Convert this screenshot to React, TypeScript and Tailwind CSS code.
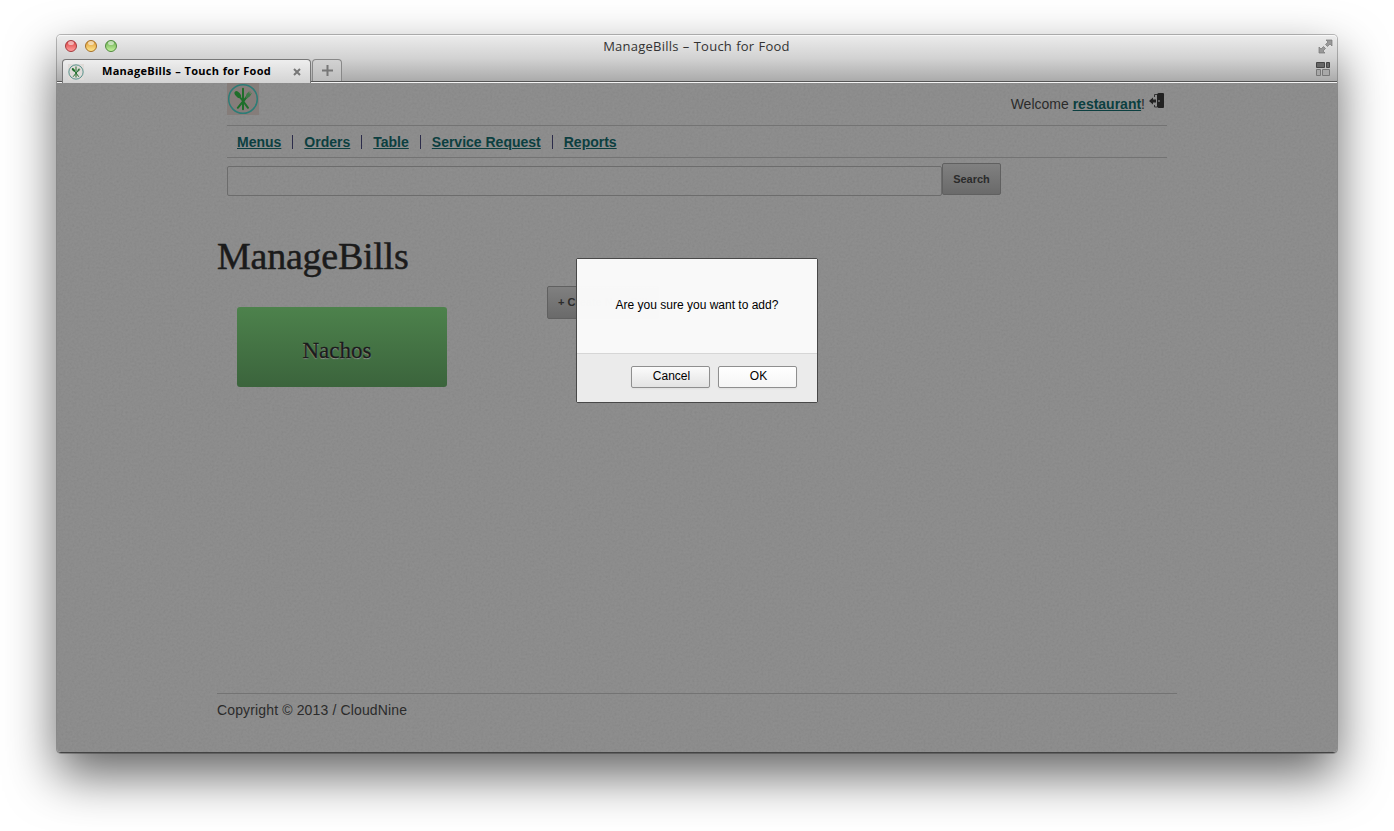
import React from "react";

function Logo({ className }: { className: string }) {
  return (
    <svg className={className} viewBox="0 0 32 32" fill="none">
      <circle cx="16" cy="16" r="14.3" stroke="#2d7c76" strokeWidth="1.5" />
      <g stroke="#1f6e2a" strokeWidth="2" strokeLinecap="round">
        <path d="M16 5.8V26.3" />
        <path d="M12 13L16 18L21 24.8" />
        <path d="M20.5 13L16 18.5L10.8 24.8" />
      </g>
      <ellipse cx="10.8" cy="11.6" rx="2.3" ry="4.2" transform="rotate(-40 10.8 11.6)" fill="#1f6e2a" />
      <path d="M18.5 14.5L19.5 11L22.8 7.6L21.4 10.6L24 8.2L22.4 11.2L25 9.8L23 13.2L20 15.6Z" fill="#3b7a45" />
    </svg>
  );
}

function TrafficLight({ className }: { className: string }) {
  return (
    <span className={`relative block h-3 w-3 overflow-hidden rounded-full border ${className}`}>
      <span className="absolute left-[2px] top-0 h-[4px] w-[6px] rounded-full bg-white/55" />
    </span>
  );
}

function Texture() {
  return (
    <svg className="pointer-events-none absolute inset-0 h-full w-full opacity-[0.08]" aria-hidden="true">
      <filter id="paper">
        <feTurbulence type="fractalNoise" baseFrequency="0.45" numOctaves="2" stitchTiles="stitch" />
        <feColorMatrix type="saturate" values="0" />
        <feComponentTransfer><feFuncA type="linear" slope="0" intercept="1" /></feComponentTransfer>
      </filter>
      <rect width="100%" height="100%" filter="url(#paper)" />
    </svg>
  );
}

function TitleBar() {
  return (
    <header className="relative flex h-[48px] flex-col rounded-t-[4px] border-b border-[#f4f4f4] bg-linear-to-b from-[#ececec] via-[#d2d2d2] to-[#a9a9a9] shadow-[inset_0_1px_0_#f8f8f8,inset_0_-1px_0_#555]">
      <div className="flex h-[23px] items-center px-2 pb-px">
        <div className="flex w-24 gap-2">
          <TrafficLight className="border-[#a3383b] bg-linear-to-b from-[#d8363c] to-[#ff9d9d]" />
          <TrafficLight className="border-[#a56e25] bg-linear-to-b from-[#dc982c] to-[#ffe68c]" />
          <TrafficLight className="border-[#4f8a3c] bg-linear-to-b from-[#67ac4d] to-[#c4f29d]" />
        </div>
        <h2 className="flex-1 whitespace-nowrap pr-px text-center font-['Open_Sans',sans-serif] text-[13px] leading-[22px] tracking-[0.24px] text-[#333] [word-spacing:0.5px]">
          ManageBills – Touch for Food
        </h2>
        <div className="flex w-24 justify-end">
          <svg className="h-[15px] w-[15px] translate-x-[4px]" viewBox="0 0 15 15" fill="#999" stroke="#777" strokeWidth=".7">
            <path d="M8 1H14V7L12 5L9.5 7.5L7.5 5.5L10 3Z" />
            <path d="M1 8V14H7L5 12L7.5 9.5L5.5 7.5L3 10Z" />
          </svg>
        </div>
      </div>
      <div className="flex h-[24px] items-start pl-[5px] pt-px">
        <div className="relative z-10 flex h-[24px] w-[249px] shrink-0 items-center rounded-t-[4px] border-x border-t border-[#777] bg-linear-to-b from-[#eeeeee] to-[#d3d3d3] pl-[5px]">
          <span className="h-4 w-4 bg-[#dfdbd8]"><Logo className="h-4 w-4" /></span>
          <span className="ml-[18px] flex-1 whitespace-nowrap font-['Open_Sans',sans-serif] text-[11px] font-bold tracking-[0.27px] text-black [word-spacing:0.5px]">
            ManageBills – Touch for Food
          </span>
          <svg className="mr-[9px] h-2 w-2" viewBox="0 0 8 8" stroke="#777" strokeWidth="2"><path d="M1 1L7 7M7 1L1 7" /></svg>
        </div>
        <div className="ml-px flex h-[22px] w-[30px] items-center justify-center rounded-t-[4px] border-x border-t border-[#888] bg-linear-to-b from-[#d2d2d2] to-[#bcbcbc]">
          <svg className="h-[11px] w-[11px]" viewBox="0 0 11 11" stroke="#777" strokeWidth="2"><path d="M5.5 0V11M0 5.5H11" /></svg>
        </div>
        <div className="flex flex-1 justify-end pr-[7px] pt-[3px]">
          <svg className="h-[14px] w-[14px]" viewBox="0 0 14 14" strokeWidth="1">
            <g fill="#666" stroke="#444"><path d="M.5 .5H8.5V5.5H.5Z" /><path d="M10.5 .5H13.5V5.5H10.5Z" /></g>
            <g fill="#a8a8a8" stroke="#777"><path d="M.5 7.5H4.5V13.5H.5Z" /><path d="M6.5 7.5H13.5V13.5H6.5Z" /></g>
          </svg>
        </div>
      </div>
    </header>
  );
}

const links = ["Menus", "Orders", "Table", "Service Request", "Reports"];

function Page() {
  return (
    <main className="relative flex h-[670px] flex-col items-center bg-[#888888]">
      <Texture />
      <div className="relative flex h-full w-[960px] flex-col text-[14px] text-[#2b2b2b]">
        <div className="mx-[10px] flex h-[43px] justify-between border-b border-[#737373]">
          <span className="h-8 w-8 bg-[#857d7a]"><Logo className="h-8 w-8" /></span>
          <div className="flex items-start pr-[2px] pt-[10px]">
            <p className="whitespace-nowrap leading-[22px]">Welcome <a className="font-bold text-[#0c3f40] underline">restaurant</a>!</p>
            <svg className="ml-[4px] h-4 w-4" viewBox="0 0 16 16" fill="#222">
              <path d="M8 1L9.5 0H14Q15 0 15 1V14Q15 15 14 15H9.5L8 14Z" />
              <path d="M0 8L4 4.5V6.5H7V9.5H4V11.5Z" />
              <path d="M5.5 4V1.5H8M5.5 12V14H8" fill="none" stroke="#333" />
              <circle cx="10" cy="8" r=".8" fill="#aaa" />
            </svg>
          </div>
        </div>
        <nav className="mx-[10px] flex h-8 items-center border-b border-[#737373] pl-[10px]">
          {links.map((name, i) => (
            <React.Fragment key={name}>
              {i > 0 && <span className="mx-[11px] h-[14px] w-px bg-[#2c2c4a]" />}
              <a className="whitespace-nowrap font-bold leading-4 text-[#0c3f40] underline underline-offset-1">{name}</a>
            </React.Fragment>
          ))}
        </nav>
        <form className="ml-[10px] flex h-[38px] items-end pt-[5px]">
          <input aria-label="Search" className="h-[30px] w-[715px] rounded-[2px] border border-[#6c6c6c] bg-transparent" />
          <button type="button" className="mb-px h-[32px] w-[59px] rounded-[2px] border border-[#606060] bg-linear-to-b from-[#808080] to-[#6a6a6a] text-[11px] font-bold">Search</button>
        </form>
        <h1 className="mt-[35px] h-[51px] whitespace-nowrap font-['Liberation_Serif',serif] text-[38px] leading-[50px] tracking-[-0.25px] text-[#1b1b1b] [-webkit-text-stroke:0.5px_#1b1b1b]">ManageBills</h1>
        <div className="ml-[20px] mt-[4px] flex items-start gap-[100px]">
          <div className="mt-[21px] flex h-[80px] w-[210px] items-center justify-center rounded-[3px] bg-linear-to-b from-[#4d824c] to-[#3b643c] pr-[10px] pt-[9px]">
            <span className="font-['Liberation_Serif',serif] text-[23px] text-[#1b1b1b] [-webkit-text-stroke:0.3px_#1b1b1b] [text-shadow:0_1px_1px_#999]">Nachos</span>
          </div>
          <button type="button" className="h-[33px] w-[112px] whitespace-nowrap rounded-[2px] border border-[#606060] bg-linear-to-b from-[#808080] to-[#6a6a6a] pl-[10px] text-left text-[11px] font-bold">+ Create New Bill</button>
        </div>
        <footer className="mb-[29px] mt-auto h-[31px] border-t border-[#737373] pt-[5px] leading-[22px] tracking-[0.14px]">Copyright © 2013 / CloudNine</footer>
      </div>
      <div role="dialog" className="absolute left-[519px] top-[175px] flex h-[145px] w-[242px] flex-col rounded-[2px] border border-[#484848] text-[12px] text-black">
        <div className="h-[95px] whitespace-nowrap border-b border-[#d6d6d6] bg-[#fbfbfb]/98 pt-[37px] text-center leading-[18px]">Are you sure you want to add?</div>
        <div className="flex flex-1 items-start justify-end gap-2 bg-[#ebebeb] pr-[20px] pt-[12px]">
          <button type="button" className="h-[22px] w-[79px] rounded-[2px] border border-[#8f8f8f] bg-linear-to-b from-[#fbfbfb] to-[#e3e3e3] pb-[2px] pl-[2px] shadow-xs">Cancel</button>
          <button type="button" className="h-[22px] w-[79px] rounded-[2px] border border-[#8f8f8f] bg-linear-to-b from-white to-[#f5f5f5] pb-[2px] pl-[2px] shadow-xs">OK</button>
        </div>
      </div>
    </main>
  );
}

export default function App() {
  return (
    <div className="h-[831px] w-[1394px] overflow-hidden bg-white pl-[57px] pt-[35px] font-['Liberation_Sans',Arial,sans-serif]">
      <div className="w-[1280px] rounded-[4px] shadow-[0_22px_50px_rgba(0,0,0,.61),0_0_0_1px_rgba(0,0,0,.25)]">
        <div className="h-[718px] overflow-hidden rounded-[4px] border-b border-[#444]">
          <TitleBar />
          <Page />
        </div>
      </div>
    </div>
  );
}
